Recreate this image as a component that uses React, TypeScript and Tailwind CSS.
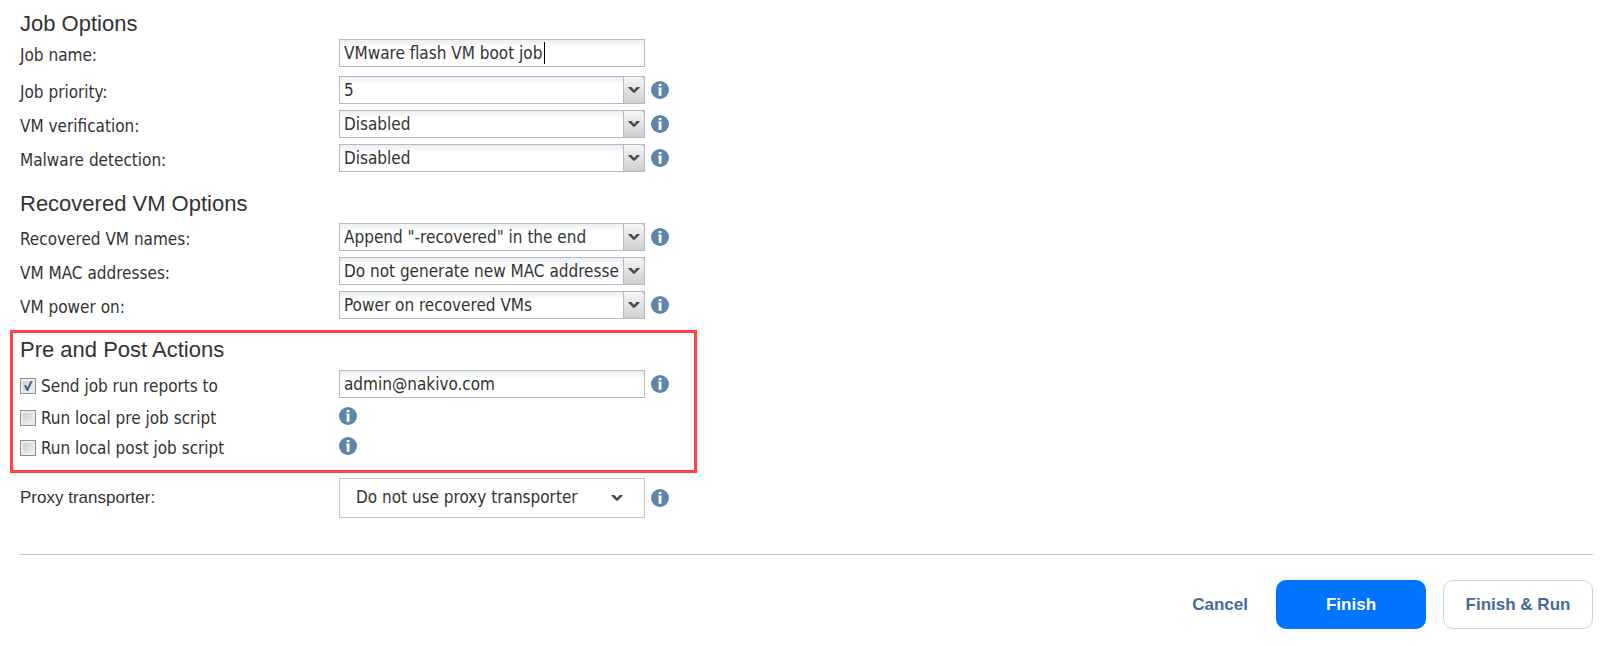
import React, { useState } from 'react';
import { clsx } from 'clsx';

interface SelectFieldProps {
    id: string;
    label: string;
    options: string[];
    hint?: boolean;
}

interface CheckFieldProps {
    label: string;
    defaultChecked?: boolean;
}

const rowClass = 'flex items-center';
const labelClass = 'w-[319px] shrink-0 pt-1 leading-6';
const boxClass =
    'h-7 w-full border border-[#b5b8c8] bg-white bg-linear-to-b from-[#e9eeee] to-white to-30% pl-1 leading-6 outline-none';

function InfoIcon() {
    return (
        <svg viewBox="0 0 18 18" className="size-[18px] shrink-0" role="img" aria-label="Info">
            <circle cx="9" cy="9" r="9" fill="#6085ab" />
            <path d="M7.7 3h2.8v2.2H7.7z" fill="#fff" />
            <path d="M7 6.6h3.5v8.2H7.7V7.6H7z" fill="#fff" />
        </svg>
    );
}

function ArrowIcon() {
    return (
        <svg viewBox="0 0 12 8" className="h-2 w-3" aria-hidden="true">
            <path d="M0.4 1h3L6 4 8.6 1h3v0.8L6.7 6.8H5.3L0.4 1.8z" fill="#4a4a4a" />
        </svg>
    );
}

/** Labelled drop-down with the grey trigger on its right edge */
function SelectField({ id, label, options, hint = true }: SelectFieldProps) {
    return (
        <div className={rowClass}>
            <label htmlFor={id} className={labelClass}>{label}</label>
            <div className="grid w-[306px] shrink-0">
                <select
                    id={id}
                    className={clsx(boxClass, 'col-start-1 row-start-1 appearance-none rounded-none pr-[25px]')}
                >
                    {options.map((option) => (
                        <option key={option}>{option}</option>
                    ))}
                </select>
                <span className="pointer-events-none col-start-1 row-start-1 flex w-[22px] items-center justify-center justify-self-end rounded-tr-sm border border-[#b5b8c8] bg-linear-to-b from-[#f6f6f6] to-[#cfcfcf]">
                    <ArrowIcon />
                </span>
            </div>
            {hint && <span className="ml-1.5"><InfoIcon /></span>}
        </div>
    );
}

function CheckField({ label, defaultChecked }: CheckFieldProps) {
    return (
        <label className="flex w-[319px] shrink-0 items-center gap-[5px] pt-1 leading-6">
            <span className="grid size-4 shrink-0">
                <input
                    type="checkbox"
                    defaultChecked={defaultChecked}
                    className="peer col-start-1 row-start-1 size-4 appearance-none border border-[#8e8f8f] bg-linear-to-br from-[#c3c7cc] to-[#f6f6f6] shadow-[inset_0_0_0_2px_#ececec]"
                />
                <svg
                    viewBox="0 0 16 16"
                    className="pointer-events-none invisible col-start-1 row-start-1 size-4 peer-checked:visible"
                    aria-hidden="true"
                >
                    <path d="M4 7.5l2-.6 1.3 2.5L10.6 3h2L8.2 13H6.6z" fill="#4a5f9e" />
                </svg>
            </span>
            {label}
        </label>
    );
}

function SectionTitle({ children }: { children: React.ReactNode }) {
    return <h2 className="font-['Liberation_Sans',Arial,sans-serif] text-[22px] leading-7">{children}</h2>;
}

export default function App() {
    const [jobName, setJobName] = useState('VMware flash VM boot job');
    const [email, setEmail] = useState('admin@nakivo.com');

    return (
        <main className="bg-white pt-2.5 pr-3 pb-4 pl-2.5 font-['DejaVu_Sans_Condensed',Tahoma,sans-serif] text-[17px] text-[#333]">
            <form onSubmit={(e) => e.preventDefault()}>
                {/* Job options */}
                <section className="px-2.5">
                    <SectionTitle>Job Options</SectionTitle>
                    <div className="mt-px flex flex-col gap-1.5">
                        <div className="mb-[3px] flex items-center">
                            <label htmlFor="job-name" className={labelClass}>Job name:</label>
                            <div className="relative w-[306px]">
                                <input
                                    id="job-name"
                                    value={jobName}
                                    onChange={(e) => setJobName(e.target.value)}
                                    className={clsx(boxClass, 'border-[#999]')}
                                />
                                {/* Text cursor */}
                                <span className="absolute top-[3px] left-[205px] h-[22px] w-px bg-black" />
                            </div>
                        </div>
                        <SelectField id="priority" label="Job priority:" options={['5', '4', '3', '2', '1']} />
                        <SelectField id="verification" label="VM verification:" options={['Disabled']} />
                        <SelectField id="malware" label="Malware detection:" options={['Disabled']} />
                    </div>
                </section>

                {/* Recovered VM options */}
                <section className="mt-[18px] px-2.5">
                    <SectionTitle>Recovered VM Options</SectionTitle>
                    <div className="mt-[5px] flex flex-col gap-1.5">
                        <SelectField id="names" label="Recovered VM names:" options={['Append "-recovered" in the end']} />
                        <SelectField id="mac" label="VM MAC addresses:" options={['Do not generate new MAC addresses']} hint={false} />
                        <SelectField id="power" label="VM power on:" options={['Power on recovered VMs']} />
                    </div>
                </section>

                {/* Pre and post actions */}
                <section className="mt-[11px] max-w-[687px] border-3 border-[#ff4347] px-[7px] pt-[3px] pb-2.5">
                    <SectionTitle>Pre and Post Actions</SectionTitle>
                    <div className="mt-1.5 flex items-center">
                        <CheckField label="Send job run reports to" defaultChecked />
                        <input
                            type="email"
                            aria-label="Report recipient"
                            value={email}
                            onChange={(e) => setEmail(e.target.value)}
                            className={clsx(boxClass, 'max-w-[306px]')}
                        />
                        <span className="ml-1.5"><InfoIcon /></span>
                    </div>
                    <div className="mt-1 flex flex-col gap-0.5">
                        <div className={rowClass}>
                            <CheckField label="Run local pre job script" />
                            <InfoIcon />
                        </div>
                        <div className={rowClass}>
                            <CheckField label="Run local post job script" />
                            <InfoIcon />
                        </div>
                    </div>
                </section>

                <div className="mt-[5px] flex items-center px-2.5">
                    <label
                        htmlFor="proxy"
                        className="w-[319px] shrink-0 font-['Liberation_Sans',Arial,sans-serif] text-[17px] leading-6"
                    >
                        Proxy transporter:
                    </label>
                    <div className="grid w-[306px] shrink-0 items-center">
                        <select
                            id="proxy"
                            className="col-start-1 row-start-1 h-10 w-full appearance-none border border-[#c4c4c4] bg-white pr-10 pl-4 outline-none"
                        >
                            <option>Do not use proxy transporter</option>
                        </select>
                        <span className="pointer-events-none col-start-1 row-start-1 mr-[22px] justify-self-end">
                            <ArrowIcon />
                        </span>
                    </div>
                    <span className="ml-1.5"><InfoIcon /></span>
                </div>

                {/* Footer buttons */}
                <footer className="mt-9 ml-2.5 flex items-center justify-end border-t border-[#c4c4c4] pt-[25px] font-['Liberation_Sans',Arial,sans-serif] text-[17px] font-bold text-[#456b9c]">
                    <button type="button" className="mr-7">Cancel</button>
                    <button type="submit" className="mr-[17px] h-[49px] w-[150px] rounded-[10px] bg-[#0073ff] text-white">
                        Finish
                    </button>
                    <button type="button" className="h-[49px] w-[150px] rounded-[10px] border border-[#c3d3e6] bg-white">
                        Finish &amp; Run
                    </button>
                </footer>
            </form>
        </main>
    );
}
